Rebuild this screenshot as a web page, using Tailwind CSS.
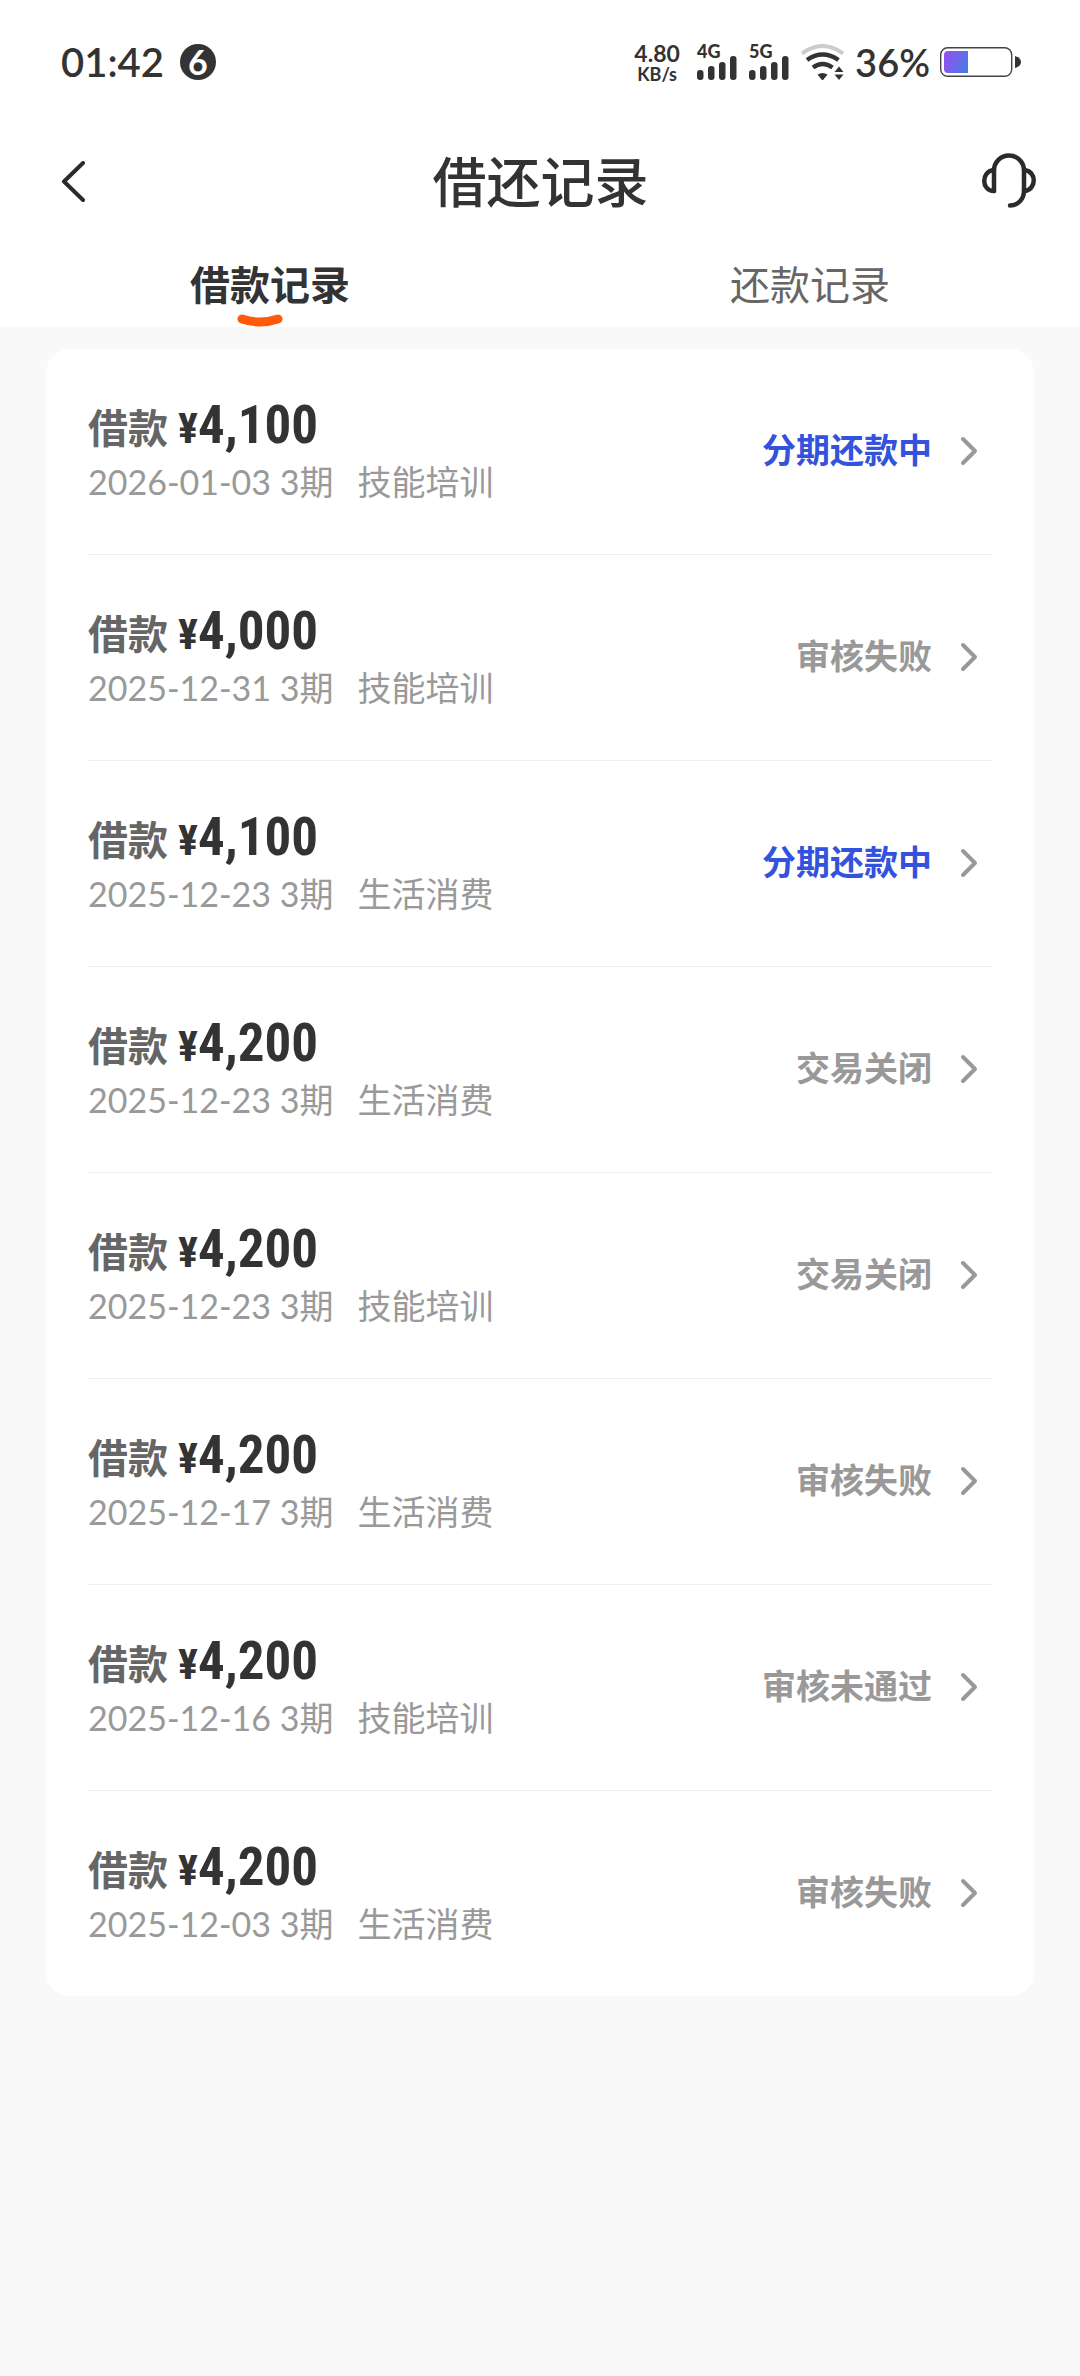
<!DOCTYPE html>
<html lang="zh-CN">
<head>
    <meta charset="UTF-8">
    <meta name="viewport" content="width=device-width, initial-scale=1.0">
    <title>借还记录</title>
    <script src="https://cdn.jsdelivr.net/npm/@tailwindcss/browser@4"></script>
</head>
<body class="bg-[#f9f9f9] min-h-dvh font-[Lato,'Noto_Sans_CJK_SC',sans-serif] text-[#333]">
    <header class="bg-white">
        <!-- status bar -->
        <div class="flex items-center justify-between h-31 pl-[61px] pr-[58px]">
            <div class="flex items-center gap-4">
                <span class="text-[40px] leading-none font-semibold">01:42</span>
                <span class="flex items-center justify-center size-9 rounded-full bg-[#333] text-white text-[34px] leading-none font-bold">6</span>
            </div>
            <div class="flex items-center">
                <div class="flex flex-col items-center font-bold w-12 mr-4">
                    <span class="text-[23px] leading-[23px]">4.80</span>
                    <span class="text-[18px] leading-[18px]">KB/s</span>
                </div>
                <div class="relative w-10 h-9 mr-3">
                    <span class="absolute left-0 top-0 text-[18px] leading-[14px] font-black">4G</span>
                    <svg class="w-full h-full" viewBox="0 0 40 36" fill="#333">
                        <rect x="0" y="26" width="6.500" height="10" rx="3"/>
                        <rect x="11" y="22" width="6.500" height="14" rx="3"/>
                        <rect x="22" y="18" width="6.500" height="18" rx="3"/>
                        <rect x="33" y="12" width="6.500" height="24" rx="3"/>
                    </svg>
                </div>
                <div class="relative w-10 h-9 mr-3">
                    <span class="absolute left-0 top-0 text-[18px] leading-[14px] font-black">5G</span>
                    <svg class="w-full h-full" viewBox="0 0 40 36" fill="#333">
                        <rect x="0" y="26" width="6.500" height="10" rx="3"/>
                        <rect x="11" y="22" width="6.500" height="14" rx="3"/>
                        <rect x="22" y="18" width="6.500" height="18" rx="3"/>
                        <rect x="33" y="12" width="6.500" height="24" rx="3"/>
                    </svg>
                </div>
                <svg class="w-11 h-9 mr-[10px]" viewBox="0 0 44 36" fill="none" stroke="#333" stroke-width="4.500">
                    <path d="M1 9.500Q21.500-5.500 42 9.500" stroke="#ccc" stroke-width="4"/>
                    <path d="M6 16Q21.500 5 37.500 16"/>
                    <path d="M12 23.500Q21.500 16.500 31.500 23.500"/>
                    <path d="M16.500 30.500Q21.500 27.500 26.500 30.500L22.500 35.500Q21.500 36.500 20.500 35.500Z" fill="#333" stroke="none"/>
                    <path d="M38 22.500L42.500 28H33.500ZM38 36L42.500 30.500H33.500Z" fill="#333" stroke="none"/>
                </svg>
                <span class="text-[38px] leading-none font-semibold mr-[10px]">36%</span>
                <svg class="w-[82px] h-[30px]" viewBox="0 0 82 30">
                    <defs>
                        <linearGradient id="charge" x1="0" y1="0.300" x2="1" y2="0.700">
                            <stop offset="0" stop-color="#9152f0"/>
                            <stop offset="1" stop-color="#4b79e4"/>
                        </linearGradient>
                    </defs>
                    <rect x="0.700" y="0.700" width="71" height="28.600" rx="7" fill="#fff" stroke="#444" stroke-width="1.400"/>
                    <path d="M28 4H8Q4 4 4 8V22Q4 26 8 26H28Z" fill="url(#charge)"/>
                    <path d="M75 9Q81 11 81 15T75 21Z" fill="#333"/>
                </svg>
            </div>
        </div>

        <!-- title -->
        <div class="grid grid-cols-[1fr_auto_1fr] items-center h-[117px] pl-11 pr-[43px]">
            <button type="button" aria-label="返回" class="justify-self-start px-4">
                <svg class="w-7 h-11" viewBox="0 0 28 44" fill="none" stroke="#2b2b2b" stroke-width="4" stroke-linecap="round" stroke-linejoin="round">
                    <path d="M23 2L4 20.500L23 39"/>
                </svg>
            </button>
            <h1 class="text-[54px] leading-none font-medium">借还记录</h1>
            <button type="button" aria-label="客服" class="justify-self-end">
                <svg class="size-14 overflow-visible" viewBox="0 0 56 56" fill="none" stroke="#2b2b2b" stroke-width="4.500" stroke-linecap="round" stroke-linejoin="round">
                    <path d="M13 36V15.500A15 15 0 0 1 43 15.500V36C43 44 37 50.500 29 50.500"/>
                    <path d="M13 15C0 16 0 36 13 36"/>
                    <path d="M43 15C56 16 56 35 43 36"/>
                </svg>
            </button>
        </div>

        <!-- tabs -->
        <nav class="grid grid-cols-2 h-[86px] text-[40px] leading-none">
            <a href="#" class="relative flex justify-center pt-6 font-bold">
                借款记录
                <svg class="absolute left-1/2 bottom-0 w-12 h-[14px] -ml-[34px]" viewBox="0 0 48 14" fill="none" stroke="#ff5a0a" stroke-width="9" stroke-linecap="round">
                    <path d="M6 6Q24 12 42 6"/>
                </svg>
            </a>
            <a href="#" class="flex justify-center pt-6 text-[#666]">还款记录</a>
        </nav>
    </header>

    <main class="px-[46px] pt-[22px]">
        <ul id="list" class="bg-white rounded-3xl px-[42px]"></ul>
    </main>
</body>
<script>
    const records = [
        ["4,100", "2026-01-03", "技能培训", "分期还款中"],
        ["4,000", "2025-12-31", "技能培训", "审核失败"],
        ["4,100", "2025-12-23", "生活消费", "分期还款中"],
        ["4,200", "2025-12-23", "生活消费", "交易关闭"],
        ["4,200", "2025-12-23", "技能培训", "交易关闭"],
        ["4,200", "2025-12-17", "生活消费", "审核失败"],
        ["4,200", "2025-12-16", "技能培训", "审核未通过"],
        ["4,200", "2025-12-03", "生活消费", "审核失败"]
    ];
    let output = "";
    records.forEach(function([amount, date, use, status]){
        const color = status == "分期还款中" ? "text-[#3353dc]" : "text-[#999]";
        output += '<li class="border-b border-[#eee] last:border-b-0">'
            + '<a href="#" class="flex items-center justify-between h-[205px] pb-1">'
            + '<div class="pt-1">'
            + '<div class="flex items-baseline h-15 leading-[58px] font-bold">'
            + '<span class="text-[40px] text-[#666] mr-[10px]">借款</span>'
            + '<span class="font-[Roboto_Condensed,Roboto,sans-serif] text-[42px]">¥</span>'
            + '<span class="font-[Roboto_Condensed,Roboto,sans-serif] text-[53px]">' + amount + '</span>'
            + '</div>'
            + '<div class="flex text-[34px] leading-[52px] text-[#999]">'
            + '<span class="mr-6">' + date + ' 3期</span><span>' + use + '</span>'
            + '</div>'
            + '</div>'
            + '<div class="flex items-center gap-7 pr-3 text-[34px] leading-12 font-bold ' + color + '">'
            + '<span>' + status + '</span>'
            + '<svg class="w-5 h-8" viewBox="0 0 20 32" fill="none" stroke="#999" stroke-width="4" stroke-linecap="round" stroke-linejoin="round"><path d="M3 5L15 17L3 29"/></svg>'
            + '</div>'
            + '</a></li>';
    });
    document.getElementById("list").innerHTML = output;
</script>
</html>
